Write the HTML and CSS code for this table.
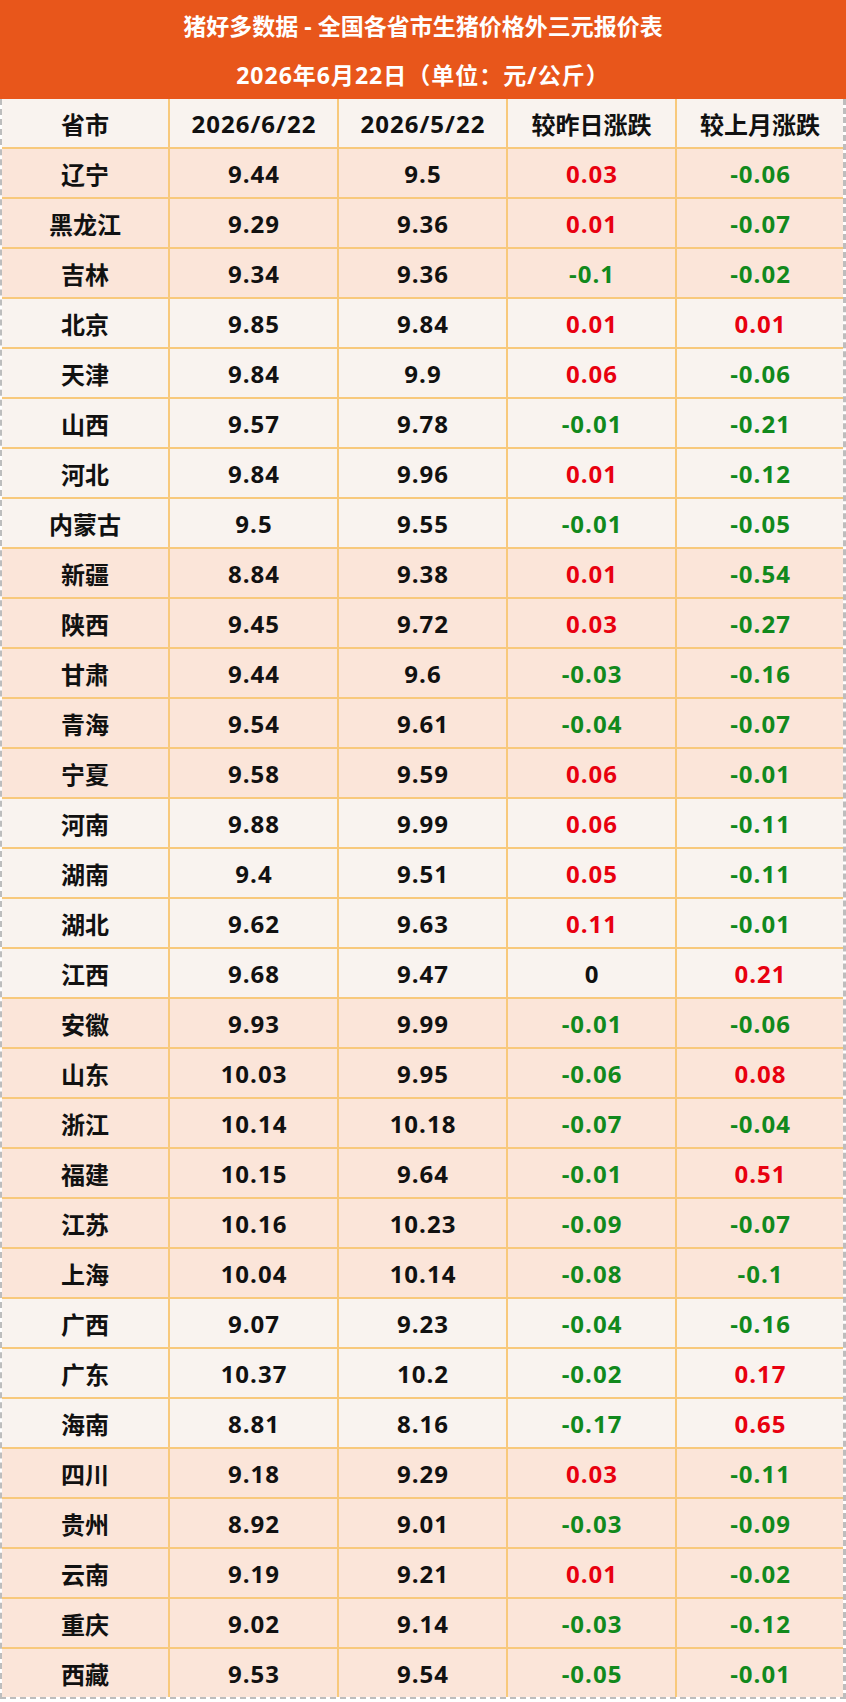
FILE: index.html
```html
<!DOCTYPE html>
<html lang="zh-CN">
<head>
<meta charset="utf-8">
<title>猪好多数据 - 全国各省市生猪价格外三元报价表</title>
<link rel="stylesheet" href="styles.css">
</head>
<body>
<div class="sheet">
  <div class="title">
    <div class="title-line">猪好多数据 - 全国各省市生猪价格外三元报价表</div>
    <div class="title-line sub">2026年6月22日（单位：元/公斤）</div>
  </div>
  <div class="table">
    <div class="row head light"><div class="cell">省市</div><div class="cell num">2026/6/22</div><div class="cell num">2026/5/22</div><div class="cell">较昨日涨跌</div><div class="cell">较上月涨跌</div></div>

    <div class="row peach"><div class="cell">辽宁</div><div class="cell num">9.44</div><div class="cell num">9.5</div><div class="cell num up">0.03</div><div class="cell num down">-0.06</div></div>
    <div class="row peach"><div class="cell">黑龙江</div><div class="cell num">9.29</div><div class="cell num">9.36</div><div class="cell num up">0.01</div><div class="cell num down">-0.07</div></div>
    <div class="row peach"><div class="cell">吉林</div><div class="cell num">9.34</div><div class="cell num">9.36</div><div class="cell num down">-0.1</div><div class="cell num down">-0.02</div></div>

    <div class="row light"><div class="cell">北京</div><div class="cell num">9.85</div><div class="cell num">9.84</div><div class="cell num up">0.01</div><div class="cell num up">0.01</div></div>
    <div class="row light"><div class="cell">天津</div><div class="cell num">9.84</div><div class="cell num">9.9</div><div class="cell num up">0.06</div><div class="cell num down">-0.06</div></div>
    <div class="row light"><div class="cell">山西</div><div class="cell num">9.57</div><div class="cell num">9.78</div><div class="cell num down">-0.01</div><div class="cell num down">-0.21</div></div>
    <div class="row light"><div class="cell">河北</div><div class="cell num">9.84</div><div class="cell num">9.96</div><div class="cell num up">0.01</div><div class="cell num down">-0.12</div></div>
    <div class="row light"><div class="cell">内蒙古</div><div class="cell num">9.5</div><div class="cell num">9.55</div><div class="cell num down">-0.01</div><div class="cell num down">-0.05</div></div>

    <div class="row peach"><div class="cell">新疆</div><div class="cell num">8.84</div><div class="cell num">9.38</div><div class="cell num up">0.01</div><div class="cell num down">-0.54</div></div>
    <div class="row peach"><div class="cell">陕西</div><div class="cell num">9.45</div><div class="cell num">9.72</div><div class="cell num up">0.03</div><div class="cell num down">-0.27</div></div>
    <div class="row peach"><div class="cell">甘肃</div><div class="cell num">9.44</div><div class="cell num">9.6</div><div class="cell num down">-0.03</div><div class="cell num down">-0.16</div></div>
    <div class="row peach"><div class="cell">青海</div><div class="cell num">9.54</div><div class="cell num">9.61</div><div class="cell num down">-0.04</div><div class="cell num down">-0.07</div></div>
    <div class="row peach"><div class="cell">宁夏</div><div class="cell num">9.58</div><div class="cell num">9.59</div><div class="cell num up">0.06</div><div class="cell num down">-0.01</div></div>

    <div class="row light"><div class="cell">河南</div><div class="cell num">9.88</div><div class="cell num">9.99</div><div class="cell num up">0.06</div><div class="cell num down">-0.11</div></div>
    <div class="row light"><div class="cell">湖南</div><div class="cell num">9.4</div><div class="cell num">9.51</div><div class="cell num up">0.05</div><div class="cell num down">-0.11</div></div>
    <div class="row light"><div class="cell">湖北</div><div class="cell num">9.62</div><div class="cell num">9.63</div><div class="cell num up">0.11</div><div class="cell num down">-0.01</div></div>
    <div class="row light"><div class="cell">江西</div><div class="cell num">9.68</div><div class="cell num">9.47</div><div class="cell num">0</div><div class="cell num up">0.21</div></div>

    <div class="row peach"><div class="cell">安徽</div><div class="cell num">9.93</div><div class="cell num">9.99</div><div class="cell num down">-0.01</div><div class="cell num down">-0.06</div></div>
    <div class="row peach"><div class="cell">山东</div><div class="cell num">10.03</div><div class="cell num">9.95</div><div class="cell num down">-0.06</div><div class="cell num up">0.08</div></div>
    <div class="row peach"><div class="cell">浙江</div><div class="cell num">10.14</div><div class="cell num">10.18</div><div class="cell num down">-0.07</div><div class="cell num down">-0.04</div></div>
    <div class="row peach"><div class="cell">福建</div><div class="cell num">10.15</div><div class="cell num">9.64</div><div class="cell num down">-0.01</div><div class="cell num up">0.51</div></div>
    <div class="row peach"><div class="cell">江苏</div><div class="cell num">10.16</div><div class="cell num">10.23</div><div class="cell num down">-0.09</div><div class="cell num down">-0.07</div></div>
    <div class="row peach"><div class="cell">上海</div><div class="cell num">10.04</div><div class="cell num">10.14</div><div class="cell num down">-0.08</div><div class="cell num down">-0.1</div></div>

    <div class="row light"><div class="cell">广西</div><div class="cell num">9.07</div><div class="cell num">9.23</div><div class="cell num down">-0.04</div><div class="cell num down">-0.16</div></div>
    <div class="row light"><div class="cell">广东</div><div class="cell num">10.37</div><div class="cell num">10.2</div><div class="cell num down">-0.02</div><div class="cell num up">0.17</div></div>
    <div class="row light"><div class="cell">海南</div><div class="cell num">8.81</div><div class="cell num">8.16</div><div class="cell num down">-0.17</div><div class="cell num up">0.65</div></div>

    <div class="row peach"><div class="cell">四川</div><div class="cell num">9.18</div><div class="cell num">9.29</div><div class="cell num up">0.03</div><div class="cell num down">-0.11</div></div>
    <div class="row peach"><div class="cell">贵州</div><div class="cell num">8.92</div><div class="cell num">9.01</div><div class="cell num down">-0.03</div><div class="cell num down">-0.09</div></div>
    <div class="row peach"><div class="cell">云南</div><div class="cell num">9.19</div><div class="cell num">9.21</div><div class="cell num up">0.01</div><div class="cell num down">-0.02</div></div>
    <div class="row peach"><div class="cell">重庆</div><div class="cell num">9.02</div><div class="cell num">9.14</div><div class="cell num down">-0.03</div><div class="cell num down">-0.12</div></div>
    <div class="row peach last"><div class="cell">西藏</div><div class="cell num">9.53</div><div class="cell num">9.54</div><div class="cell num down">-0.05</div><div class="cell num down">-0.01</div></div>
  </div>
</div>
</body>
</html>
```

FILE: styles.css
```css
* { box-sizing: border-box; }
html, body { margin: 0; padding: 0; background: #ffffff; }
body {
  font-family: "Open Sans", "Noto Sans CJK SC", sans-serif;
  font-weight: 700;
  color: #111111;
}
.sheet { width: 846px; }
.title {
  background: #e8561b;
  color: #ffffff;
  height: 99px;
  display: flex;
  flex-direction: column;
}
.title-line {
  height: 49.5px;
  display: flex;
  align-items: center;
  justify-content: center;
  font-size: 23px;
}
.title-line.sub { letter-spacing: 1px; }
.table {
  border-left: 2px dashed #bdbdbd;
  border-right: 3px dashed #bdbdbd;
  border-bottom: 2px dashed #bdbdbd;
}
.row {
  display: grid;
  grid-template-columns: 168px 169px 169px 169px 1fr;
  height: 50px;
  border-bottom: 2px solid #f8c97c;
}
.row.last { border-bottom: none; height: 48px; }
.row.light { background: #f9f3ef; }
.row.peach { background: #fbe5d9; }
.cell {
  display: flex;
  align-items: center;
  justify-content: center;
  font-size: 24px;
  border-right: 2px solid #f8c97c;
  white-space: nowrap;
}
.cell.num { letter-spacing: 1px; padding-left: 1px; }
.cell:last-child { border-right: none; }
.up { color: #e8000f; }
.down { color: #11891c; }
```
